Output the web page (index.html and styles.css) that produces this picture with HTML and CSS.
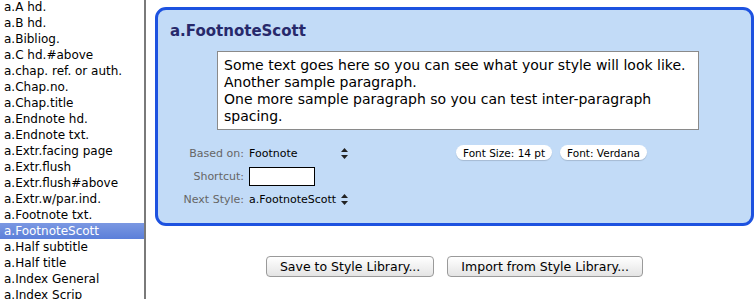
FILE: index.html
```html
<!DOCTYPE html>
<html lang="en">
<head>
    <meta charset="UTF-8">
    <title>Styles</title>
    <link rel="stylesheet" href="styles.css">
</head>
<body>
    <div class="sidebar">
        <ul class="style-list">
            <li>a.A hd.</li>
            <li>a.B hd.</li>
            <li>a.Bibliog.</li>
            <li>a.C hd.#above</li>
            <li>a.chap. ref. or auth.</li>
            <li>a.Chap.no.</li>
            <li>a.Chap.title</li>
            <li>a.Endnote hd.</li>
            <li>a.Endnote txt.</li>
            <li>a.Extr.facing page</li>
            <li>a.Extr.flush</li>
            <li>a.Extr.flush#above</li>
            <li>a.Extr.w/par.ind.</li>
            <li>a.Footnote txt.</li>
            <li class="selected">a.FootnoteScott</li>
            <li>a.Half subtitle</li>
            <li>a.Half title</li>
            <li>a.Index General</li>
            <li>a.Index Scrip</li>
        </ul>
    </div>

    <div class="main">
        <div class="panel">
            <h1 class="style-name">a.FootnoteScott</h1>
            <div class="preview">
                <p>Some text goes here so you can see what your style will look like.</p>
                <p>Another sample paragraph.</p>
                <p>One more sample paragraph so you can test inter-paragraph spacing.</p>
            </div>

            <div class="settings">
                <div class="form">
                    <div class="row">
                        <span class="label">Based on:</span>
                        <span class="select">Footnote</span>
                        <svg class="arrows" width="7" height="11" viewBox="0 0 7 11"><path d="M3.5 0 L7 4 L0 4 Z M0 7 L7 7 L3.5 11 Z" fill="#222"/></svg>
                    </div>
                    <div class="row">
                        <span class="label">Shortcut:</span>
                        <span class="shortcut"></span>
                    </div>
                    <div class="row">
                        <span class="label">Next Style:</span>
                        <span class="select">a.FootnoteScott</span>
                        <svg class="arrows" width="7" height="11" viewBox="0 0 7 11"><path d="M3.5 0 L7 4 L0 4 Z M0 7 L7 7 L3.5 11 Z" fill="#222"/></svg>
                    </div>
                </div>
                <div class="pills">
                    <button class="pill">Font Size: 14 pt</button>
                    <button class="pill">Font: Verdana</button>
                </div>
            </div>
        </div>

        <div class="buttons">
            <button class="btn">Save to Style Library...</button>
            <button class="btn">Import from Style Library...</button>
        </div>
    </div>
</body>
</html>
```

FILE: styles.css
```css
body {
    display: flex;
    margin: 0;
    height: 299px;
    overflow: hidden;
    font-family: 'DejaVu Sans', sans-serif;
    background-color: #ffffff;
}

.sidebar {
    width: 144px;
    border-right: 2px solid #7a7a7a;
    background-color: #ffffff;
    overflow: hidden;
}

.style-list {
    list-style: none;
    margin: 0;
    padding: 0;
    margin-top: -1px;
}

.style-list li {
    height: 16px;
    line-height: 16px;
    padding-left: 4px;
    font-size: 12px;
    color: #000;
    white-space: nowrap;
}

.style-list li.selected {
    background: linear-gradient(#7b98e2, #5b7fd9);
    color: #fff;
}

.main {
    flex: 1;
    padding: 7px 1px 0 9px;
}

.panel {
    height: 213px;
    background-color: #c2dbf7;
    border: 3px solid #1d52e0;
    border-radius: 11px;
    padding: 0 12px;
}

.style-name {
    margin: 12px 0 0 0;
    font-size: 15px;
    font-weight: bold;
    color: #27296b;
    height: 23px;
}

.preview {
    margin: 6px 0 0 47px;
    width: 468px;
    height: 65px;
    padding: 5px 6px 7px 6px;
    background-color: #fff;
    border: 1px solid #8a8a8a;
}

.preview p {
    margin: 0;
    font-size: 14px;
    line-height: 17px;
    color: #000;
}

.settings {
    display: flex;
    margin-top: 13px;
}

.form {
    display: flex;
    flex-direction: column;
    gap: 3px;
}

.row {
    display: flex;
    align-items: center;
    height: 20px;
}

.label {
    width: 74px;
    text-align: right;
    font-size: 11px;
    color: #666;
    margin-right: 5px;
}

.select {
    width: 90px;
    font-size: 11px;
    color: #000;
}

.arrows {
    margin-left: 2px;
}

.shortcut {
    width: 64px;
    height: 17px;
    background-color: #fff;
    border: 1px solid #000;
}

.pills {
    display: flex;
    gap: 8px;
    margin-left: 108px;
    margin-top: 2px;
    height: 16px;
}

.pill {
    font-family: 'DejaVu Sans', sans-serif;
    font-size: 10.5px;
    height: 15px;
    padding: 0 7px;
    border: none;
    border-radius: 8px;
    background-color: #fff;
    color: #000;
    box-shadow: 0 1px 1px rgba(0, 0, 0, 0.15);
}

.buttons {
    display: flex;
    justify-content: center;
    gap: 13px;
    margin-top: 30px;
}

.btn {
    font-family: 'DejaVu Sans', sans-serif;
    font-size: 12.5px;
    height: 21px;
    padding: 0 13px;
    color: #000;
    border: 1px solid #9a9a9a;
    border-radius: 4px;
    background: linear-gradient(#ffffff, #e4e4e4);
}
```
